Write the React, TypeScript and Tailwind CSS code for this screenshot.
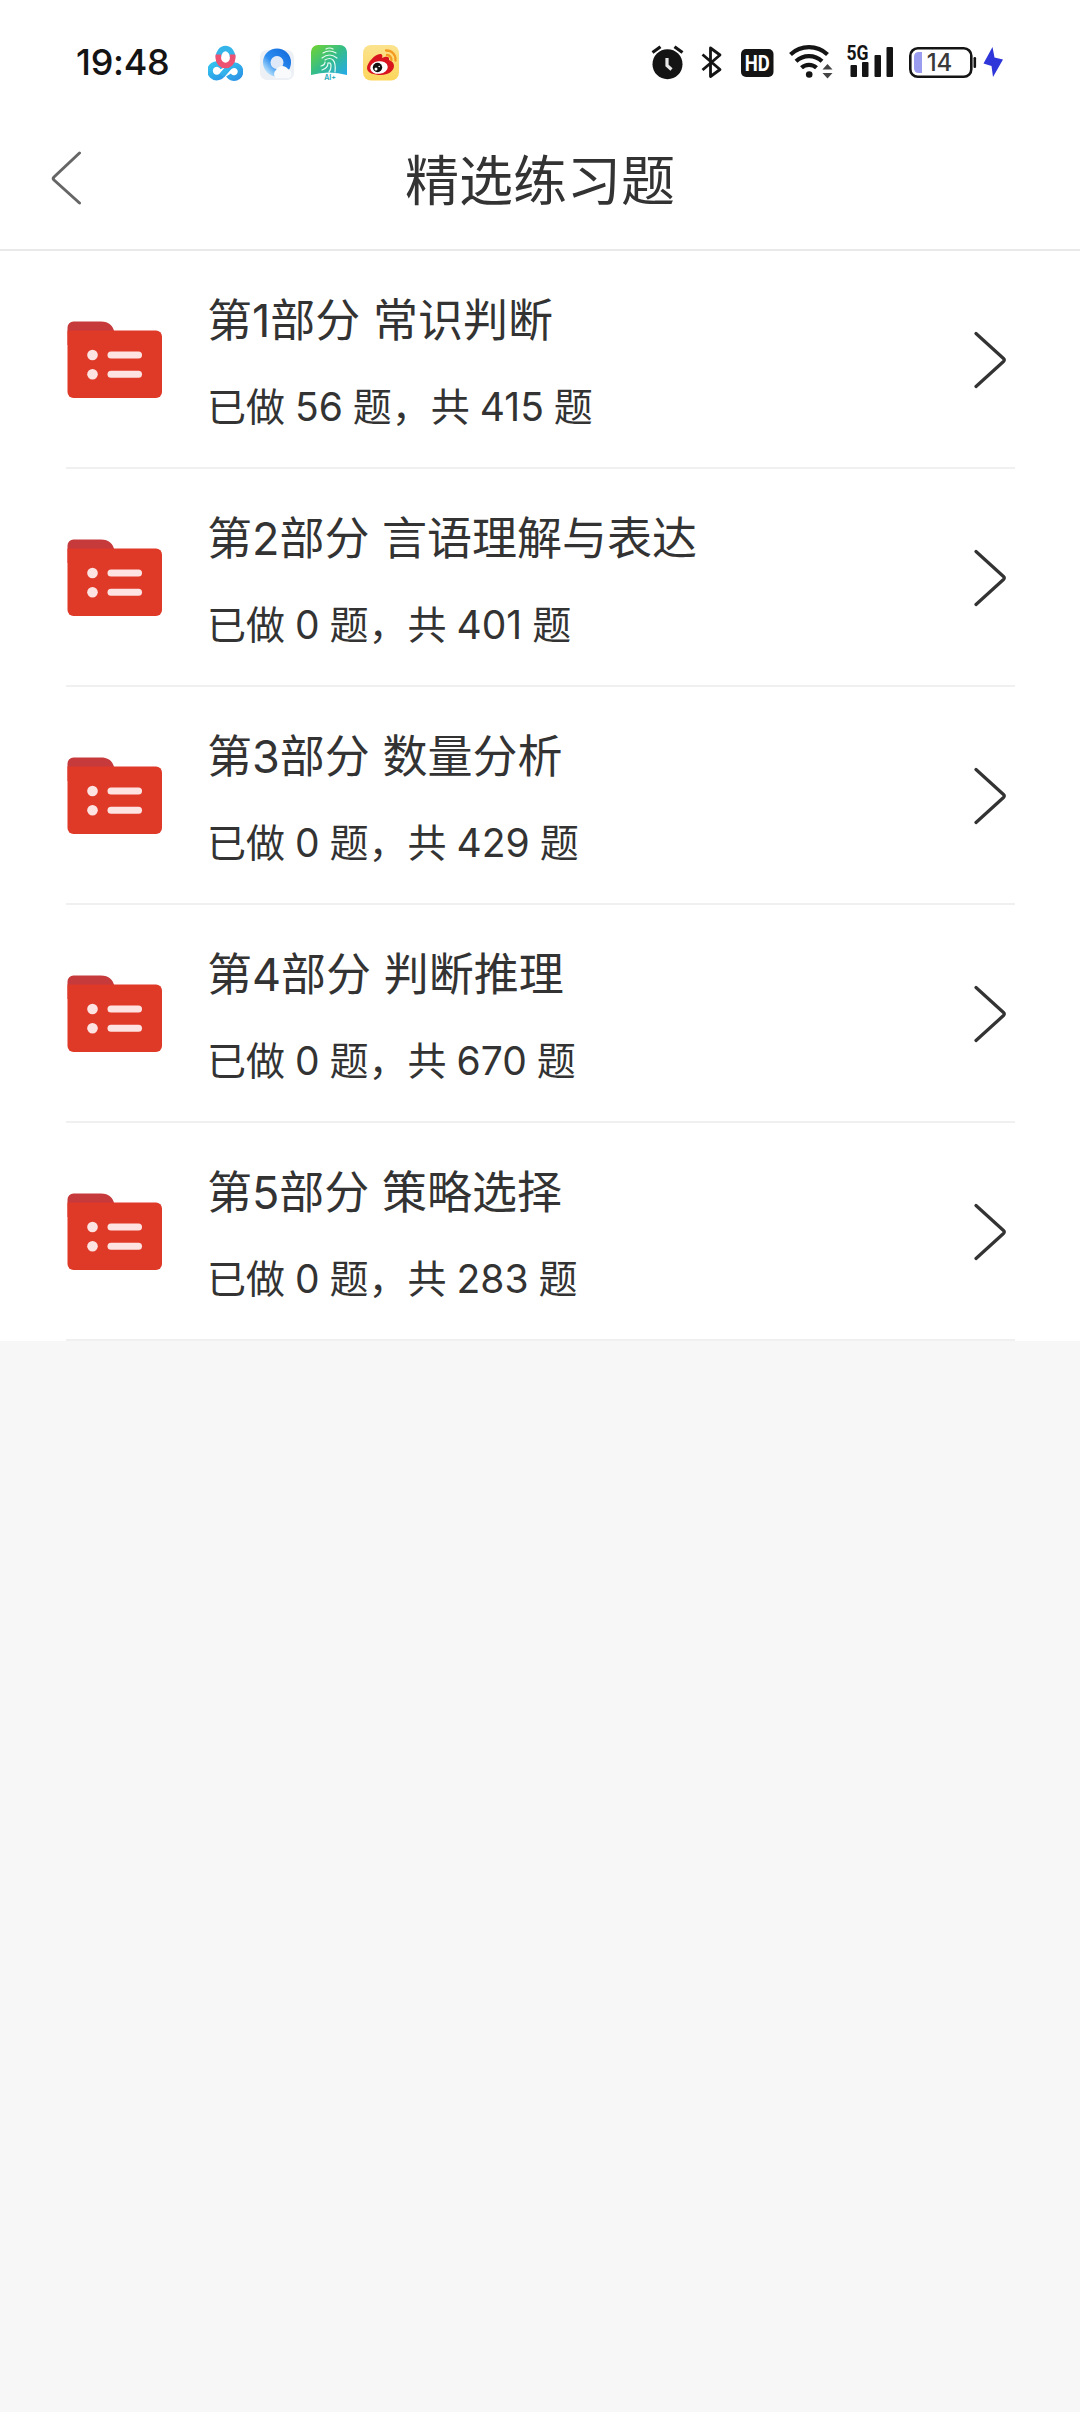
import type { ReactNode } from "react";

const sections = [
  { title: "第1部分 常识判断", done: 56, total: 415 },
  { title: "第2部分 言语理解与表达", done: 0, total: 401 },
  { title: "第3部分 数量分析", done: 0, total: 429 },
  { title: "第4部分 判断推理", done: 0, total: 670 },
  { title: "第5部分 策略选择", done: 0, total: 283 },
];

/* ── Status bar icons ── */

function CloudDiskIcon() {
  return (
    <svg className="ml-[40px]" width="35" height="36" viewBox="0 0 35 36" fill="none">
      <defs>
        <linearGradient id="disk" x1="0" y1="0" x2="1" y2="1">
          <stop offset="0" stopColor="#35c3ee" />
          <stop offset="1" stopColor="#2a93e6" />
        </linearGradient>
      </defs>
      <path d="M21.500 21.500 14.500 29.500a6.800 6.800 0 1 1 .5-6.500" stroke="url(#disk)" strokeWidth="5.600" />
      <path d="M14 30.500 21 22.500a6.500 6.500 0 1 1-.5 7.500" stroke="url(#disk)" strokeWidth="5.600" />
      <path d="M10.300 12.500a7.200 9 0 0 1 14.400 0" stroke="#35b4ea" strokeWidth="5.600" />
      <path d="M10.300 9.500v3.500a7.200 7.500 0 0 0 14.400 0v-3.500" stroke="#ee5273" strokeWidth="5.600" />
    </svg>
  );
}

function BrowserIcon() {
  return (
    <svg className="ml-[17px]" width="35" height="36" viewBox="0 0 35 36" fill="none">
      <defs>
        <linearGradient id="ring" x1="1" y1="0" x2="0" y2="1">
          <stop offset="0" stopColor="#1670df" />
          <stop offset="0.6" stopColor="#2c8df0" />
          <stop offset="1" stopColor="#b8e2fb" />
        </linearGradient>
      </defs>
      <rect y="5" width="34" height="30" rx="7" fill="#edf1f6" />
      <circle cx="17" cy="17.500" r="10" stroke="url(#ring)" strokeWidth="8" />
      <circle cx="17" cy="17.500" r="6.500" fill="#dfe9f7" />
      <path d="M16 33a5 5 0 0 1 0-8 7 7 0 0 1 12-1 5 5 0 0 1 1 9Z" fill="#f8fafc" />
    </svg>
  );
}

function FingerprintIcon() {
  return (
    <svg className="ml-[16px]" width="37" height="36" viewBox="0 0 37 36" fill="none">
      <defs>
        <linearGradient id="finger" x1="0" y1="0" x2="1" y2="1">
          <stop offset="0" stopColor="#72d42f" />
          <stop offset="0.5" stopColor="#35bd88" />
          <stop offset="1" stopColor="#25a9ec" />
        </linearGradient>
      </defs>
      <path d="M0 7a7 7 0 0 1 7-7h22a7 7 0 0 1 7 7v23q-18-5-36 0Z" fill="url(#finger)" />
      <g stroke="#e6faf0" strokeWidth="1.200" strokeLinecap="round">
        <path d="M15 4q3.500-2 7 0M12 8q6.500-4 13 0M11 13q7.500-6 15 0M14 15q5-3 8 0 3 3 2 12M10 21q4-1 4-4M11 25q6-2 6-7 3-1 3 3 0 4-2 6" />
      </g>
      <text x="19" y="35" textAnchor="middle" fontFamily="Inter, sans-serif" fontSize="7" fontWeight="600" fill="#21a8b8">
        AI+
      </text>
    </svg>
  );
}

function WeiboIcon() {
  return (
    <svg className="ml-[15px]" width="36" height="36" viewBox="0 0 36 36" fill="none">
      <defs>
        <linearGradient id="weibo" x1="0" y1="0" x2="0" y2="1">
          <stop offset="0" stopColor="#fbe38e" />
          <stop offset="1" stopColor="#fdd75c" />
        </linearGradient>
      </defs>
      <rect width="36" height="35.500" rx="8" fill="url(#weibo)" />
      <path
        d="M4 23c0-5 8-14 13-14 2 0 3 1 2 4 4-2 8-2 7 2 3 1 5 3 5 6 0 5-6 9-13 9S4 28 4 23Z"
        fill="#d8141f"
      />
      <ellipse cx="16" cy="22.500" rx="8.800" ry="6.300" fill="#fff" transform="rotate(-7 16 22.500)" />
      <circle cx="14.500" cy="22.500" r="4.700" fill="#111" />
      <circle cx="13" cy="24" r="1.500" fill="#fff" />
      <circle cx="16.200" cy="21.500" r="0.800" fill="#fff" />
      <path d="M23 5.500a9 9 0 0 1 9.500 10M24 10a5 5 0 0 1 4.500 5" stroke="#f39a22" strokeWidth="2.300" strokeLinecap="round" />
    </svg>
  );
}

function AlarmIcon() {
  return (
    <svg width="33" height="36" viewBox="0 0 33 36" fill="none">
      <circle cx="16.500" cy="19.200" r="15" fill="#141414" />
      <path d="M1.500 7.500 9.500 1.800M31.500 7.500 23.500 1.800" stroke="#141414" strokeWidth="3.200" />
      <path d="M16 13v7.500l4.500 4" stroke="#e8e8e8" strokeWidth="3.200" />
    </svg>
  );
}

function BluetoothIcon() {
  return (
    <svg className="ml-[17px]" width="22" height="36" viewBox="0 0 22 36" fill="none">
      <path d="M1.500 9.500 19 24.500 9.500 31.500V3L19 10 1.500 25" stroke="#141414" strokeWidth="2.800" strokeLinejoin="round" />
    </svg>
  );
}

function HdIcon() {
  return (
    <svg className="ml-[18px]" width="33" height="36" viewBox="0 0 33 36">
      <rect y="4" width="32.500" height="28" rx="5" fill="#141414" />
      <text x="16.300" y="25.700" textAnchor="middle" fontFamily="Roboto, sans-serif" fontSize="22" fontWeight="700" textLength="25" lengthAdjust="spacingAndGlyphs" fill="#fff">
        HD
      </text>
    </svg>
  );
}

function WifiIcon() {
  return (
    <svg className="ml-[15px]" width="45" height="36" viewBox="0 0 45 36" fill="none">
      <path d="M1.500 9.500a27 27 0 0 1 37 0M7 16.300a19 19 0 0 1 26 0M12.500 22.800a11 11 0 0 1 15 0" stroke="#141414" strokeWidth="4.200" />
      <circle cx="20.200" cy="29.500" r="3.300" fill="#141414" />
      <path d="m33.500 24.500 5-5.500 5 5.500ZM33.500 28l5 5.500 5-5.500Z" fill="#444" />
    </svg>
  );
}

function SignalIcon() {
  return (
    <svg className="ml-[12px] overflow-visible" width="48" height="36" viewBox="0 0 48 36">
      <text x="0.500" y="14.800" fontFamily="Roboto, sans-serif" fontSize="20" fontWeight="700" textLength="22" lengthAdjust="spacingAndGlyphs" fill="#141414">
        5G
      </text>
      <g fill="#141414">
        <rect x="4.500" y="20" width="6.500" height="12" rx="1" />
        <rect x="16" y="17" width="6.500" height="15" rx="1" />
        <rect x="28.500" y="10" width="6.500" height="22" rx="1" />
        <rect x="40.500" y="2" width="6.500" height="30" rx="1" />
      </g>
    </svg>
  );
}

function BatteryIcon() {
  return (
    <svg className="ml-[15px]" width="68" height="36" viewBox="0 0 68 36" fill="none">
      <rect x="1.300" y="3.300" width="61" height="28.500" rx="7.500" stroke="#141414" strokeWidth="2.600" />
      <path d="M5 12q0-5 5-5h3v21h-3q-5 0-5-5Z" fill="#9a9cf0" />
      <rect x="64.500" y="12" width="2.600" height="11" rx="1.200" fill="#141414" />
      <text x="30.500" y="26" textAnchor="middle" fontFamily="Inter, sans-serif" fontSize="24" fontWeight="500" fill="#3a3a3a">
        14
      </text>
    </svg>
  );
}

function BoltIcon() {
  return (
    <svg className="ml-[6px]" width="20" height="36" viewBox="0 0 20 36">
      <path d="M9.500 2 0.500 18.500l8 2.500L10 32 20 14.500l-8.500-2Z" fill="#2f36d9" />
    </svg>
  );
}

/* ── List pieces ── */

function FolderIcon() {
  return (
    <svg className="shrink-0" width="96" height="78" viewBox="0 0 96 78">
      <path d="M0.500 24V6.500a6 6 0 0 1 6-6H34c8 0 12 4 13.500 11V24Z" fill="#c63a3c" />
      <path d="M0.500 9.500H89a6 6 0 0 1 6 6V71a6 6 0 0 1-6 6H6.500a6 6 0 0 1-6-6Z" fill="#df3928" />
      <g fill="#fde4e2">
        <circle cx="25.500" cy="34" r="5.300" />
        <circle cx="25.500" cy="53.300" r="5.300" />
        <rect x="40.500" y="30.500" width="34.500" height="7" rx="3.500" />
        <rect x="40.500" y="49.700" width="34.500" height="7" rx="3.500" />
      </g>
    </svg>
  );
}

function Row({ title, children }: { title: string; children: ReactNode }) {
  return (
    <li className="flex h-[218px] items-center border-b-2 border-[#f0f0f0] pl-px pr-[9px] pt-[2px]">
      <FolderIcon />
      <div className="ml-[44px] grow whitespace-nowrap pt-[8px]">
        <h2 className="h-[66px] text-[45px] leading-[66px]">{title}</h2>
        <p className="mt-[20px] h-[66px] text-[39px] leading-[66px] [word-spacing:-1px]">{children}</p>
      </div>
      <svg width="32" height="58" viewBox="0 0 32 58" fill="none">
        <path d="M2 2.500 29.500 27.500q1.500 1.500 0 3L2 55.500" stroke="#333" strokeWidth="3.200" strokeLinecap="round" />
      </svg>
    </li>
  );
}

export default function App() {
  return (
    <div className="min-h-[2412px] w-[1080px] bg-[#f7f7f7] font-['Inter','Noto_Sans_CJK_SC',sans-serif] text-[#333]">
      <div className="bg-white">
        {/* ── Status bar ── */}
        <div className="flex h-[112px] items-start pl-[76px] pr-[77px] pt-[45px]">
          <span className="-mt-px w-[92px] whitespace-nowrap text-[36px] font-medium leading-[36px] tracking-[-0.3px] text-[#141414]">19:48</span>
          <CloudDiskIcon />
          <BrowserIcon />
          <FingerprintIcon />
          <WeiboIcon />
          <div className="ml-auto flex">
            <AlarmIcon />
            <BluetoothIcon />
            <HdIcon />
            <WifiIcon />
            <SignalIcon />
            <BatteryIcon />
            <BoltIcon />
          </div>
        </div>

        {/* ── Title bar ── */}
        <header className="grid h-[139px] grid-cols-[1fr_auto_1fr] items-center border-b-2 border-[#e9e9e9] pl-[51px] pr-[51px]">
          <svg className="mb-[5px]" width="32" height="54" viewBox="0 0 32 54" fill="none">
            <path d="M28.500 2 3 26q-1.500 1.500 0 3l25.500 23" stroke="#666" strokeWidth="3" strokeLinecap="round" />
          </svg>
          <h1 className="pt-[3px] text-[54px] leading-[70px]">精选练习题</h1>
        </header>

        {/* ── Question sets ── */}
        <ul className="ml-[66px] mr-[65px]">
          {sections.map((s) => (
            <Row key={s.title} title={s.title}>
              已做 {s.done} 题，共 {s.total} 题
            </Row>
          ))}
        </ul>
      </div>
    </div>
  );
}
